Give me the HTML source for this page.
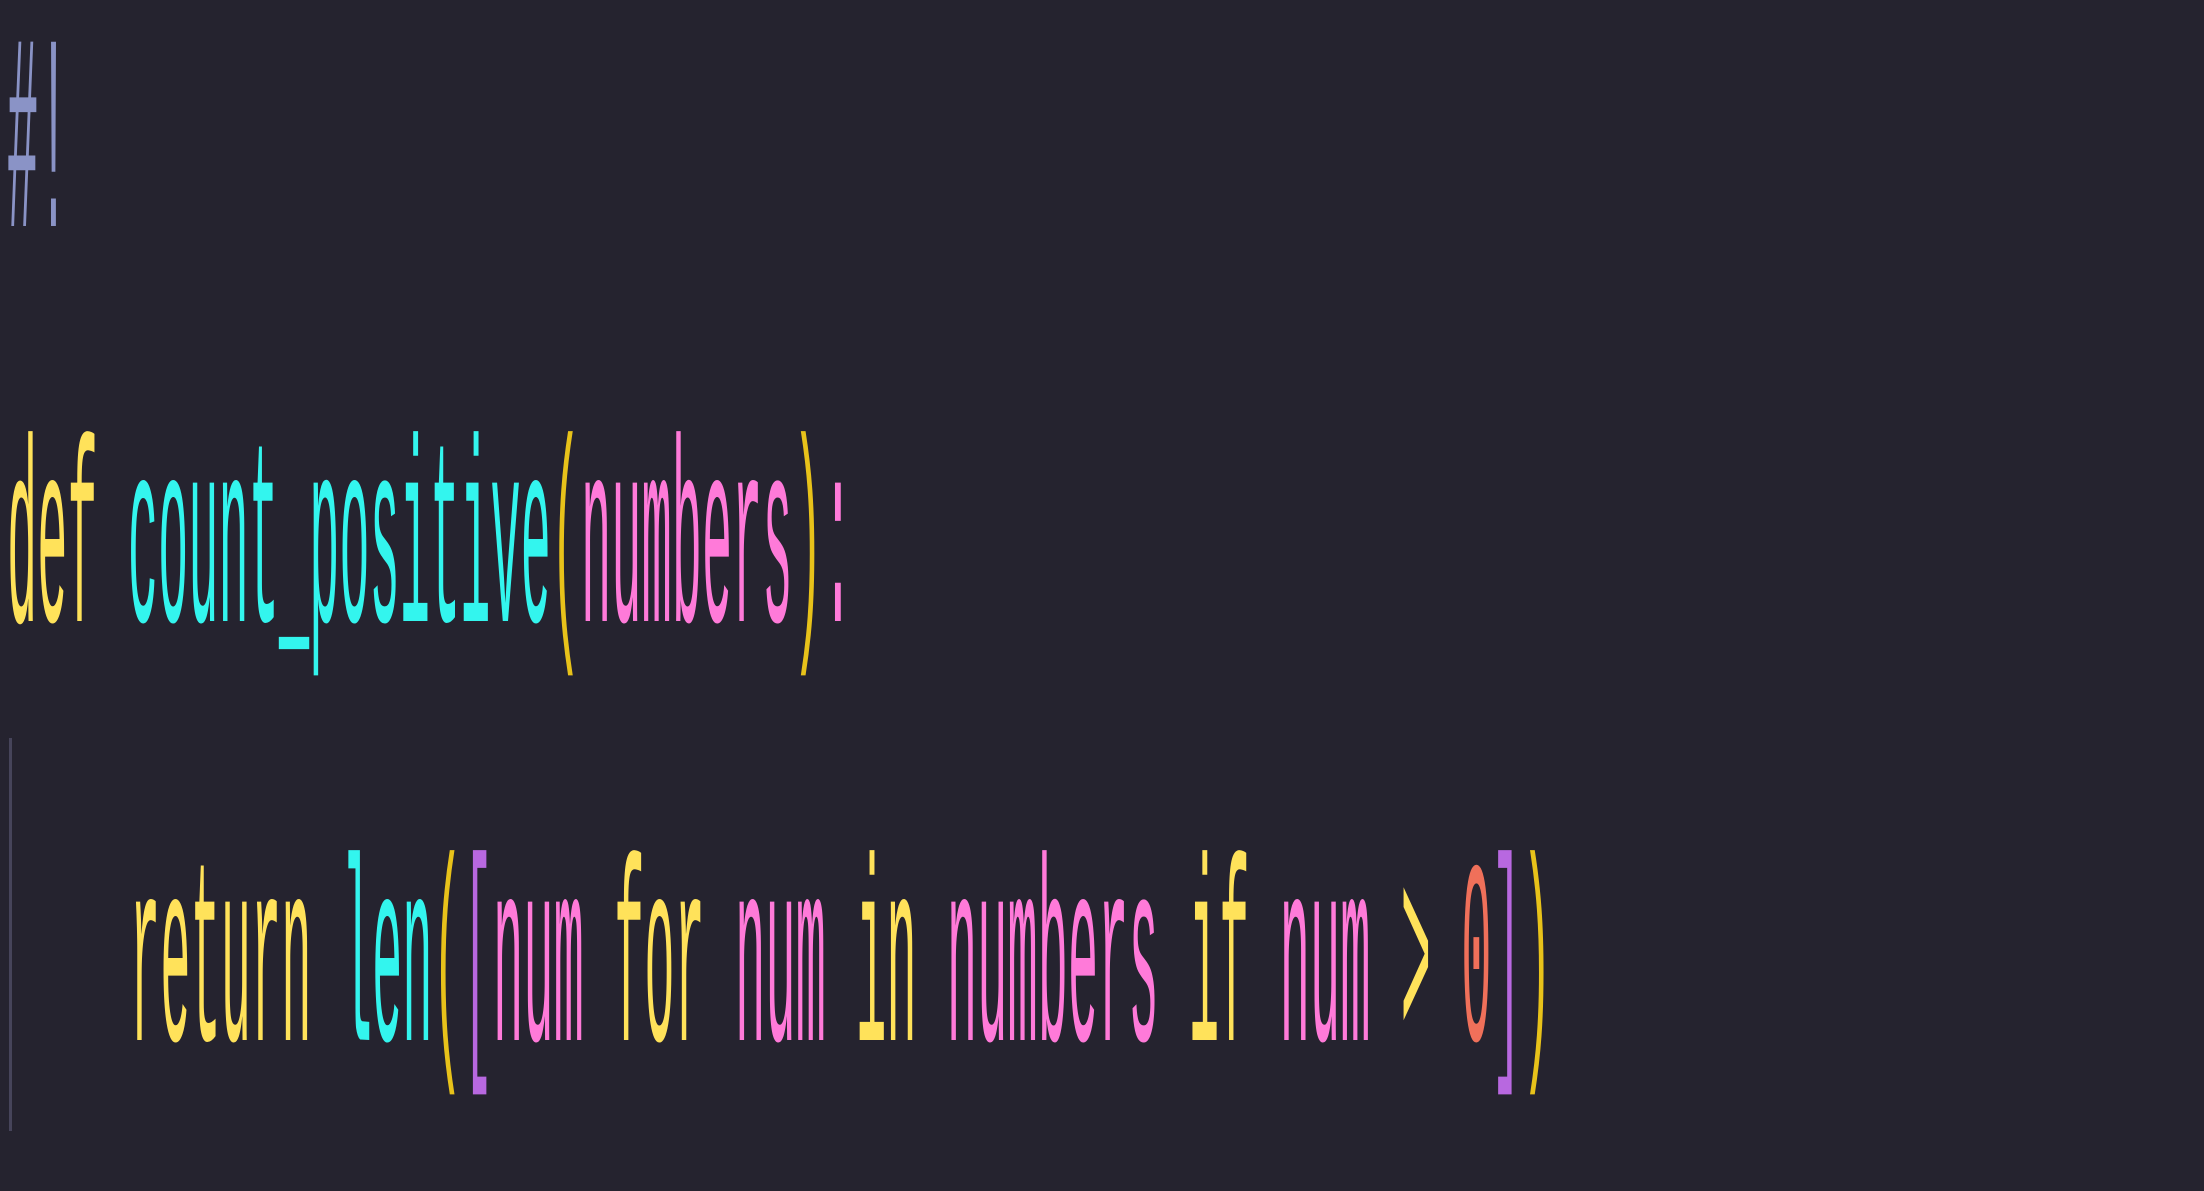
<!DOCTYPE html>
<html><head><meta charset="utf-8"><style>
html,body{margin:0;padding:0;background:#25232f;width:2204px;height:1191px;overflow:hidden}
svg{display:block}
text{font-family:"Liberation Mono",monospace;white-space:pre}
</style></head><body>
<svg width="2204" height="1191" viewBox="0 0 2204 1191" xmlns="http://www.w3.org/2000/svg">
<rect width="2204" height="1191" fill="#25232f"/>
<rect x="9" y="738" width="3" height="393" fill="#46445a"/>
<text x="7" y="226" font-size="280" fill="#8a93c6" textLength="62" lengthAdjust="spacingAndGlyphs" xml:space="preserve">#!</text>
<text x="7" y="621" font-size="262" textLength="846" lengthAdjust="spacingAndGlyphs" xml:space="preserve"><tspan fill="#ffe25a">def</tspan><tspan fill="#33f5ee"> count_positive</tspan><tspan fill="#e8c21a">(</tspan><tspan fill="#ff7ad9">numbers</tspan><tspan fill="#e8c21a">)</tspan><tspan fill="#ff7ad9">:</tspan></text>
<text x="130" y="1040" font-size="262" textLength="1422" lengthAdjust="spacingAndGlyphs" xml:space="preserve"><tspan fill="#ffe25a">return</tspan> <tspan fill="#33f5ee">len</tspan><tspan fill="#e8c21a">(</tspan><tspan fill="#b868e0">[</tspan><tspan fill="#ff7ad9">num</tspan> <tspan fill="#ffe25a">for</tspan> <tspan fill="#ff7ad9">num</tspan> <tspan fill="#ffe25a">in</tspan> <tspan fill="#ff7ad9">numbers</tspan> <tspan fill="#ffe25a">if</tspan> <tspan fill="#ff7ad9">num</tspan> <tspan fill="#ffe25a">&gt;</tspan> <tspan fill="#f0705a">0</tspan><tspan fill="#b868e0">]</tspan><tspan fill="#e8c21a">)</tspan></text>
</svg>
</body></html>
